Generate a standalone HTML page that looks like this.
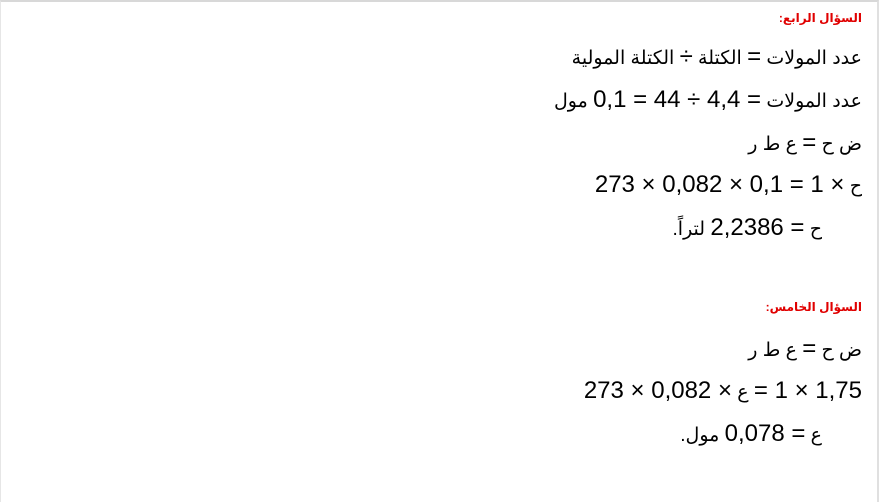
<!DOCTYPE html>
<html><head><meta charset="utf-8"><style>
html,body{margin:0;padding:0;background:#fff;width:881px;height:494px;overflow:hidden}
.box{position:absolute;left:0;top:0;width:876px;height:500px;border-top:2px solid #d8d8d8;border-left:1px solid #e6e6e6;border-right:2px solid #e0e0e0;}
.l{position:absolute;right:19px;direction:rtl;white-space:nowrap;font-family:"Liberation Sans","DejaVu Sans",sans-serif;font-size:19px;color:#000;line-height:26px}
.n{font-size:24px}
.t{font-size:12px;font-weight:bold;color:#e00000;line-height:14px}
</style></head><body>
<div class="box"></div>
<div class="l t" style="top:11px">السؤال الرابع:</div>
<div class="l" style="top:44px">عدد المولات <span class="n">=</span> الكتلة <span class="n">÷</span> الكتلة المولية</div>
<div class="l" style="top:87px">عدد المولات <span class="n">= 4,4 ÷ 44 = 0,1</span> مول</div>
<div class="l" style="top:130px">ض ح <span class="n">=</span> ع ط ر</div>
<div class="l" style="top:172px">ح <span class="n">× 1 = 0,1 × 0,082 × 273</span></div>
<div class="l" style="top:215px;right:59px">ح <span class="n">= 2,2386</span> لتراً.</div>
<div class="l t" style="top:300px">السؤال الخامس:</div>
<div class="l" style="top:336px">ض ح <span class="n">=</span> ع ط ر</div>
<div class="l" style="top:378px"><span class="n">1,75 × 1 =</span> ع <span class="n">× 0,082 × 273</span></div>
<div class="l" style="top:421px;right:59px">ع <span class="n">= 0,078</span> مول.</div>
</body></html>
